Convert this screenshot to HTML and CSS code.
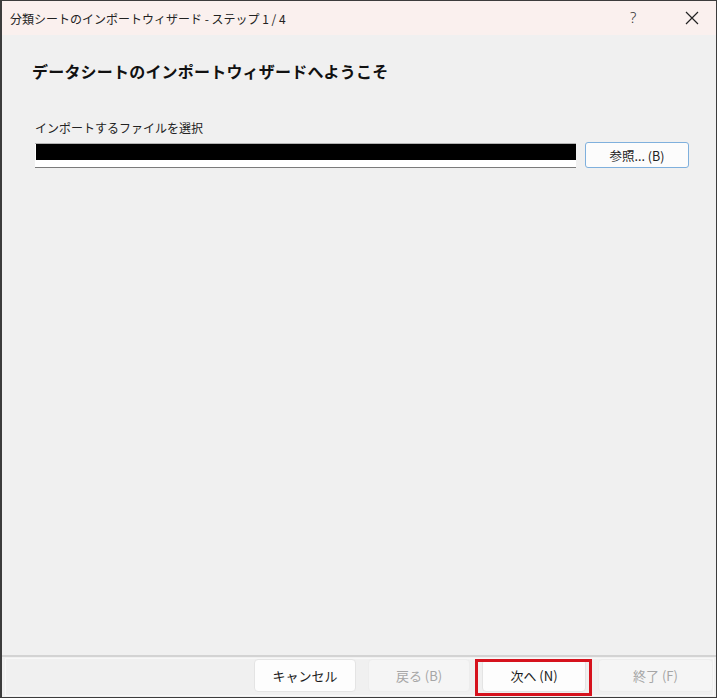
FILE: index.html
```html
<!DOCTYPE html>
<html lang="ja">

<head>
    <meta charset="UTF-8">
    <meta name="viewport" content="width=device-width, initial-scale=1.0">
    <title>分類シートのインポートウィザード</title>
    <link rel="stylesheet" href="styles.css">
</head>

<body>
    <div class="dialog">
        <div class="titlebar">
            <span class="title">分類シートのインポートウィザード - ステップ 1 / 4</span>
            <span class="help">?</span>
            <span class="close">
                <svg width="14" height="14" viewBox="0 0 14 14">
                    <path d="M1 1 L13 13 M13 1 L1 13" stroke="#222" stroke-width="1.2" fill="none" />
                </svg>
            </span>
        </div>

        <div class="content">
            <h1>データシートのインポートウィザードへようこそ</h1>
            <label class="field-label">インポートするファイルを選択</label>
            <div class="file-row">
                <div class="file-box">
                    <div class="redacted"></div>
                </div>
                <button class="browse">参照... (B)</button>
            </div>
        </div>

        <div class="footer">
            <div class="footer-inner">
                <button class="btn cancel">キャンセル</button>
                <button class="btn disabled back">戻る (B)</button>
                <button class="btn next">次へ (N)</button>
                <button class="btn disabled finish">終了 (F)</button>
            </div>
        </div>

        <!-- 注釈の赤枠 -->
        <div class="highlight"></div>
    </div>
</body>

</html>
```

FILE: styles.css
```css
body {
    margin: 0;
    background-color: #ffffff;
    font-family: "Noto Sans CJK JP", "Noto Sans", sans-serif;
    color: #1a1a1a;
}

.dialog {
    position: relative;
    width: 717px;
    height: 698px;
    box-sizing: border-box;
    border: 1px solid #3c3c3c;
    border-left-width: 2px;
    background-color: #f0f0f0;
    display: flex;
    flex-direction: column;
}

.titlebar {
    height: 34px;
    flex-shrink: 0;
    background-color: #faf0ee;
    display: flex;
    align-items: center;
    padding-left: 8px;
}

.title {
    font-size: 12px;
    color: #222;
    flex: 1;
}

.help {
    font-family: "Noto Sans", sans-serif;
    font-size: 15px;
    font-weight: 300;
    color: #333;
    width: 55px;
    text-align: left;
    margin-top: -2px;
}

.close {
    width: 31px;
    display: flex;
    align-items: center;
}

.content {
    flex: 1;
    padding: 24px 0 0 30px;
}

h1 {
    font-size: 16px;
    font-weight: bold;
    margin: 0 0 36px 0;
    color: #111;
    letter-spacing: 0.2px;
}

.field-label {
    display: block;
    font-size: 12px;
    color: #222;
    margin-left: 3px;
    margin-bottom: 7px;
}

.file-row {
    display: flex;
    align-items: flex-start;
    margin-left: 3px;
}

.file-box {
    width: 541px;
    height: 23px;
    background-color: #ffffff;
    border-top: 1px solid #b4b4b4;
    border-bottom: 1px solid #7a7a7a;
}

.redacted {
    height: 16px;
    margin-left: 1px;
    background-color: #000000;
}

.browse {
    margin-left: 9px;
    margin-top: -1px;
    width: 104px;
    height: 26px;
    background-color: #fcfcfc;
    border: 1px solid #7fb0dd;
    border-radius: 3px;
    font-family: inherit;
    font-size: 12.5px;
    color: #222;
    padding: 0;
}

.footer {
    height: 42px;
    flex-shrink: 0;
    border-top: 2px solid #d3d3d3;
    box-sizing: border-box;
    padding: 1px 2px 1px 3px;
}

.footer-inner {
    height: 100%;
    box-sizing: border-box;
    border: 1px solid #f8f8f8;
    display: flex;
    justify-content: flex-end;
    align-items: flex-start;
    gap: 12px;
}

.btn {
    height: 33px;
    width: 102px;
    padding: 0;
    font-family: inherit;
    font-size: 13px;
    border-radius: 4px;
    background-color: #fdfdfd;
    border: 1px solid #e4e4e4;
    color: #1a1a1a;
}

.btn.next {
    width: 104px;
}

.btn.disabled {
    background-color: #f5f5f5;
    border-color: #ededed;
    color: #a6a6a6;
}

.btn.finish {
    width: 115px;
}

.highlight {
    position: absolute;
    left: 473px;
    top: 658px;
    width: 111px;
    height: 31px;
    border: 3px solid #d6121d;
}
```
